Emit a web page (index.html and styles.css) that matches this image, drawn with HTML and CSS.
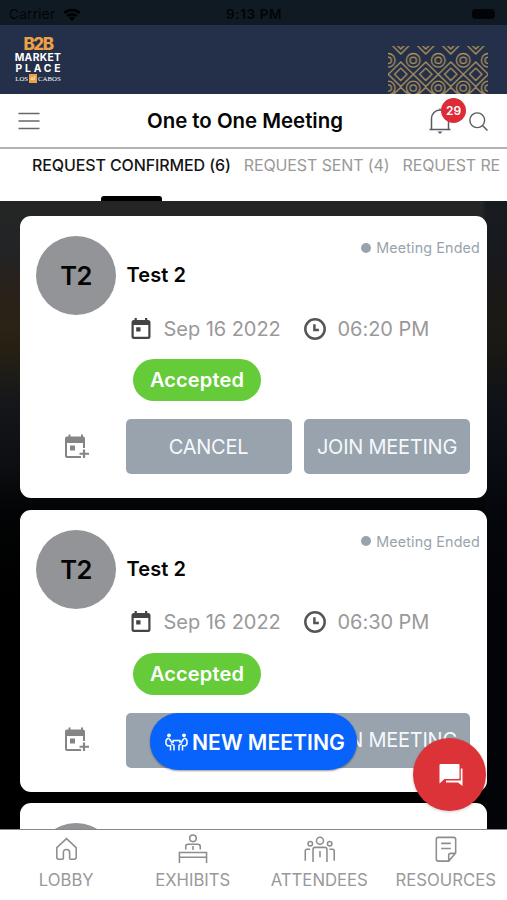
FILE: index.html
```html
<!DOCTYPE html>
<html lang="en">
<head>
<meta charset="utf-8">
<title>One to One Meeting</title>
<link rel="stylesheet" href="styles.css">
</head>
<body>
<svg class="defs" aria-hidden="true">
  <symbol id="cal" viewBox="0 0 24 24"><path fill-rule="evenodd" d="M19 3h-.8V1h-2.200v2H7.800V1H5.600v2H5a2.500 2.500 0 0 0-2.500 2.500v14A2.500 2.500 0 0 0 5 22h14a2.500 2.500 0 0 0 2.500-2.500v-14A2.500 2.500 0 0 0 19 3zm.3 16.300q0 .5-.5.5H5.200q-.5 0-.5-.5V8h14.600zM7.200 10.300h4.300v4.300H7.200z"/></symbol>
  <symbol id="clock" viewBox="0 0 24 24"><circle cx="12" cy="12" r="9.700" fill="none" stroke="currentColor" stroke-width="2.500"/><path d="M11.400 7.200v5.700h4.500" fill="none" stroke="currentColor" stroke-width="2.500"/></symbol>
  <symbol id="cal-add" viewBox="0 0 26 26"><path d="M2 22V4.500q0-2 2-2h16q2 0 2 2V9H4v12.500q0 .5.500.5H18v2H4q-2 0-2-2zM5.500.5h2v3h-2zM18 .5h2v3h-2zM20 9h2v5h-2zM7 11.500h5v5H7zM19.900 15.500h2.200v3.200H26v2h-3.900V24h-2.200v-3.300H16.500v-2h3.400z"/></symbol>
</svg>
<header class="status">
  <span class="carrier">Carrier</span>
  <svg class="wifi" viewBox="0 0 18 13"><path d="M.3 4.300a12.500 12.500 0 0 1 17.400 0l-1.700 1.800a10 10 0 0 0-14 0zM3.200 7.300a8.300 8.300 0 0 1 11.600 0L13 9a5.800 5.800 0 0 0-8 0zM6 10a4.400 4.400 0 0 1 6 0l-3 3z"/></svg>
  <span class="time">9:13 PM</span>
  <span class="battery"></span>
</header>
<div class="banner">
  <div class="logo">
    <span class="b2b">B2B</span>
    <span class="market">MARKET</span>
    <span class="place">PLACE</span>
    <span class="cabos"><span>LOS</span><i>al</i><span>CABOS</span></span>
  </div>
  <svg class="pattern" viewBox="0 0 100 48">
    <defs><pattern id="weave" width="25" height="48" patternUnits="userSpaceOnUse" patternTransform="translate(.3 0)">
      <g fill="none" stroke="#b0935a" stroke-width="1.300">
        <path d="M3.500-1l9 9 9-9M8.500-1l4 4 4-4M0 28.300L12.500 16 25 28.300 12.500 40.500zM6.300 28.300l6.200-6.200 6.200 6.200-6.200 6.200zM4.500 49l8-7.500 8 7.500"/>
        <circle cx="0" cy="14.300" r="6.800"/><circle cx="0" cy="14.300" r="3.200"/>
        <circle cx="25" cy="14.300" r="6.800"/><circle cx="25" cy="14.300" r="3.200"/>
        <circle cx="0" cy="42" r="6.800"/><circle cx="0" cy="42" r="3.200"/>
        <circle cx="25" cy="42" r="6.800"/><circle cx="25" cy="42" r="3.200"/>
        <path d="M-4 1.500L0 5.500l4-4M21 1.500l4 4 4-4" stroke-width="0"/>
      </g></pattern></defs>
    <rect width="100" height="48" fill="url(#weave)"/>
  </svg>
</div>
<div class="titlebar">
  <svg class="menu" viewBox="0 0 21 18"><path d="M0 1.500h21M0 9h21M0 16.500h21"/></svg>
  <h1>One to One Meeting</h1>
  <div class="bell">
    <svg viewBox="0 0 22 26"><path d="M.5 21.500h21M2.500 21V10.500a8.500 8.500 0 0 1 17 0V21M11 .5v2"/><path class="solid" d="M8.500 23.500h5L11 26z"/></svg>
    <span class="badge">29</span>
  </div>
  <svg class="search" viewBox="0 0 18 18"><circle cx="7.800" cy="7.800" r="7"/><path d="M13 13l4.500 4.500"/></svg>
</div>
<nav class="tabs">
  <span class="tab active">REQUEST CONFIRMED (6)</span>
  <span class="tab">REQUEST SENT (4)</span>
  <span class="tab">REQUEST RE</span>
</nav>
<main class="list">
  <article class="card">
    <div class="top"><div class="avatar">T2</div><h2>Test 2</h2><span class="state">Meeting Ended</span></div>
    <div class="when"><svg><use href="#cal"/></svg><span>Sep 16 2022</span><svg><use href="#clock"/></svg><span>06:20 PM</span></div>
    <span class="pill">Accepted</span>
    <div class="actions"><svg><use href="#cal-add"/></svg><button>CANCEL</button><button>JOIN MEETING</button></div>
  </article>
  <article class="card">
    <div class="top"><div class="avatar">T2</div><h2>Test 2</h2><span class="state">Meeting Ended</span></div>
    <div class="when"><svg><use href="#cal"/></svg><span>Sep 16 2022</span><svg><use href="#clock"/></svg><span>06:30 PM</span></div>
    <span class="pill">Accepted</span>
    <div class="actions"><svg><use href="#cal-add"/></svg><button>CANCEL</button><button>JOIN MEETING</button></div>
  </article>
  <article class="card">
    <div class="top"><div class="avatar"></div></div>
  </article>
</main>
<button class="new-meeting">
  <svg viewBox="0 0 23 18"><g fill="none" stroke="currentColor" stroke-width="1.500"><path d="M4.500 5.500H2.500L1 7.500v3.500l1.500 1.800h3v4.700M4.500 6l2 3H9M18.500 5.500h2L22 7.500v3.500l-1.500 1.800h-3v4.700M18.500 6l-2 3H14M7.500 7.500h8M9 17.500v-5L6 10.500M14 17.500v-5l3-2"/></g><circle cx="4" cy="2.300" r="1.900"/><circle cx="19" cy="2.300" r="1.900"/></svg>
  <span>NEW MEETING</span>
</button>
<button class="chat" aria-label="Chat"><svg viewBox="0 0 24 24"><path d="M1.500 1h18q1 0 1 1v13q0 1-1 1h-14L.5 20.500V2q0-1 1-1z"/><path d="M21.800 5.500h1.700V23l-4.500-3.500H7v-2h14.800z"/></svg></button>
<footer class="bottom">
  <div class="item"><svg viewBox="0 0 32 32"><path d="M16 4.800L26 14v10q0 2-2 2h-3.800q-1 0-1-1v-6q0-3-3.200-3t-3.200 3v6q0 1-1 1H8q-2 0-2-2V14z"/></svg><span>LOBBY</span></div>
  <div class="item"><svg viewBox="0 0 32 32"><circle cx="16.500" cy="4.500" r="3.400"/><path d="M9 16v-3q0-2.500 2.500-2.500h10q2.500 0 2.500 2.500v3M16.500 12.500v4M2.500 30V19h28v11M2.500 24h28"/></svg><span>EXHIBITS</span></div>
  <div class="item"><svg viewBox="0 0 32 32"><circle cx="16.500" cy="7" r="3.600"/><circle cx="6.500" cy="10" r="2.300"/><circle cx="26.500" cy="10" r="2.300"/><path d="M9.300 29V16q0-2.200 2.200-2.200h10q2.200 0 2.200 2.200v13M16.500 17.500V24M1.300 27.500v-10q0-1.800 1.800-1.800h3.200M31.200 27.500v-10q0-1.800-1.800-1.800h-3.200"/></svg><span>ATTENDEES</span></div>
  <div class="item"><svg viewBox="0 0 32 32"><path d="M8.500 3.500h16q2 0 2 2v14L19.300 28H8.500q-2 0-2-2V5.500q0-2 2-2zM26.500 20h-5.200q-2 0-2 2v6M11.500 9.700h10M11.500 15h10"/></svg><span>RESOURCES</span></div>
</footer>
</body>
</html>
```

FILE: styles.css
```css
* { box-sizing: border-box; }
body { margin: 0; width: 507px; height: 900px; overflow: hidden; display: flex; flex-direction: column; position: relative; font-family: Inter, "Liberation Sans", sans-serif; background: #fff; color: #050505; }
button { border: 0; padding: 0; font-family: inherit; }
h1, h2 { margin: 0; }
.defs { position: absolute; width: 0; height: 0; }

.status { height: 25px; flex: none; background: #101a22; color: #020407; display: grid; grid-template-columns: 54px 163px 246px 24px; align-items: center; padding: 3px 11px 0 9px; font-size: 13.500px; }
.carrier { letter-spacing: .3px; }
.wifi { width: 18px; height: 13px; }
.time { font-weight: 600; font-size: 13.500px; letter-spacing: .6px; white-space: nowrap; }
.battery { height: 10px; width: 23px; border-radius: 4px; background: #020407; }

.banner { height: 69px; flex: none; background: #242f49; display: flex; justify-content: space-between; padding: 12px 19px 0 14px; }
.logo { width: 48px; display: flex; flex-direction: column; align-items: center; color: #fff; font-weight: 700; white-space: nowrap; }
.b2b { color: #eda046; font-size: 17px; line-height: 15px; letter-spacing: -1.400px; font-weight: 800; }
.market { font-size: 10.300px; line-height: 11px; letter-spacing: .35px; }
.place { font-size: 10.300px; line-height: 11px; letter-spacing: 2.900px; margin-right: -2.900px; }
.cabos { display: flex; align-items: center; font: 6.800px/9px "Liberation Serif", serif; }
.cabos i { background: #eda046; width: 8px; height: 9px; font-size: 6px; text-align: center; margin: 0 1px; }
.pattern { width: 100px; height: 48px; margin-top: 9px; }

.titlebar { height: 55px; flex: none; display: grid; grid-template-columns: 129px 281px 40px 20px; align-items: center; padding-left: 18px; border-bottom: 2px solid #b2b2b2; }
.menu { width: 22px; height: 18px; margin-top: -1px; fill: none; stroke: #686868; stroke-width: 1.500; }
h1 { font-size: 20.400px; line-height: 54px; font-weight: 600; white-space: nowrap; }
.bell { position: relative; height: 26px; left: 1px; }
.bell svg { width: 22px; height: 26px; fill: none; stroke: #555b60; stroke-width: 1.500; }
.bell .solid { fill: #555b60; stroke: none; }
.badge { position: absolute; left: 12px; top: -10px; width: 25px; height: 25px; border-radius: 50%; background: #db2c37; color: #fff; font-size: 12px; line-height: 25px; font-weight: 600; text-align: center; }
.search { width: 19px; height: 19px; margin-left: 1px; fill: none; stroke: #5c5c5c; stroke-width: 1.350; }

.tabs { height: 52px; flex: none; display: flex; gap: 13px; padding-left: 32px; overflow: hidden; white-space: nowrap; color: #999; font-size: 16px; line-height: 33px; letter-spacing: -.11px; }
.tab.active { color: #151515; font-weight: 500; position: relative; }
.tab.active::after { content: ""; position: absolute; left: 69px; bottom: 0; width: 61px; height: 5px; background: #000; border-radius: 3px 3px 0 0; }

.list { flex: none; height: 628px; overflow: hidden; padding: 15px 20px 0; display: flex; flex-direction: column; gap: 11.500px; background: linear-gradient(90deg, transparent 95%, #060b1466 96%), linear-gradient(#242626 0, #232425 50px, #28211d 80px, #292414 125px, #262014 150px, #15171a 200px, #0c0e11 265px, #030405 310px, #000 400px); }
.card { height: 282px; flex: none; border-radius: 11px; background: #fff; display: flex; flex-direction: column; padding: 20px 7px 0 16px; }
.top { height: 79px; display: grid; grid-template-columns: 80px 1fr auto; column-gap: 10.500px; }
.avatar { width: 80px; height: 79px; border-radius: 50%; background: #929497; text-align: center; font-size: 25.500px; line-height: 79px; font-weight: 600; letter-spacing: -.7px; }
h2 { font-size: 20px; line-height: 79px; font-weight: 600; letter-spacing: .1px; white-space: nowrap; }
.state { display: flex; align-items: center; height: 23px; gap: 5px; font-size: 14.300px; letter-spacing: .15px; color: #98a3ad; white-space: nowrap; }
.state::before { content: ""; width: 10px; height: 10px; border-radius: 50%; background: #98a3ad; }
.when { display: grid; grid-template-columns: 35px 139px 35px 1fr; align-items: center; margin: 0 0 0 92.500px; height: 27px; font-size: 20px; letter-spacing: -.05px; color: #999; white-space: nowrap; }
.when svg { width: 24px; height: 24px; fill: #444; color: #555; }
.pill { margin: 17px 0 0 97px; width: 128px; height: 42px; border-radius: 21px; background: #65cb39; color: #fff; font-size: 20px; line-height: 42px; font-weight: 600; letter-spacing: .15px; text-align: center; }
.actions { margin: 18px 0 0 26px; display: grid; grid-template-columns: 51px 166px 166px; column-gap: 12.500px; align-items: center; }
.actions svg { width: 26px; height: 26px; margin-left: 1px; fill: #858585; }
.actions button { height: 55px; border-radius: 5px; background: #98a3ad; color: #f5f9fc; font-size: 20px; letter-spacing: -.25px; white-space: nowrap; }

.new-meeting { position: absolute; left: 150px; top: 713px; width: 207px; height: 57px; border-radius: 29px; background: #0763fb; color: #fff; font-size: 21.200px; font-weight: 600; display: flex; align-items: center; padding-left: 15px; gap: 4px; white-space: nowrap; box-shadow: 0 1px 2px #0006; }
.new-meeting svg { width: 23px; height: 18px; fill: currentColor; flex: none; }
.chat { position: absolute; left: 413px; top: 738px; width: 73px; height: 73px; border-radius: 50%; background: #dc3339; box-shadow: 0 1px 3px #0003; display: flex; align-items: center; justify-content: center; }
.chat svg { width: 24px; height: 24px; fill: #fff; margin-left: 2px; }

.bottom { flex: 1; border-top: 1px solid #888; background: #fff; display: flex; padding: 4px 0 0 3px; }
.item { width: 126.500px; flex: none; display: flex; flex-direction: column; align-items: center; color: #999; font-size: 16.700px; white-space: nowrap; }
.item svg { width: 31px; height: 31px; fill: none; stroke: #8b8d90; stroke-width: 1.600; }
.item span { line-height: 30px; }
```
